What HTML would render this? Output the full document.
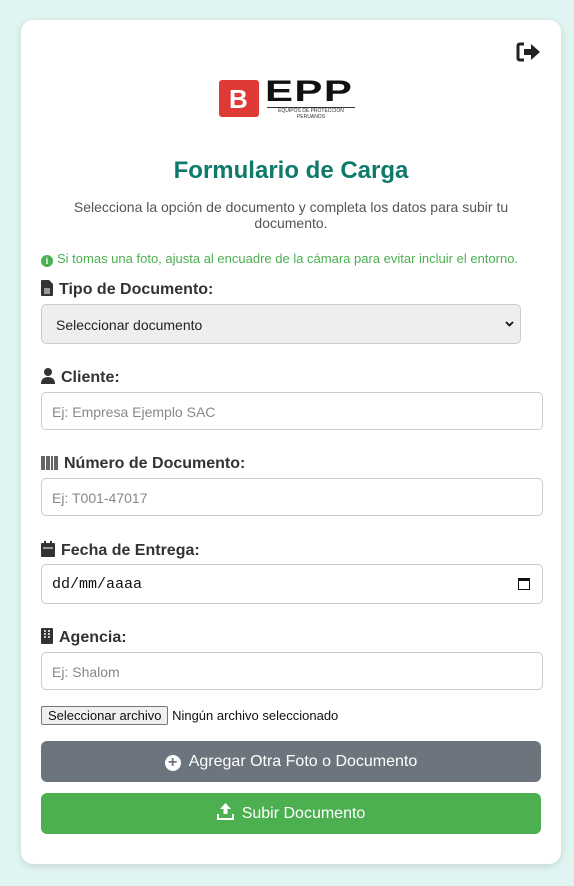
<!DOCTYPE html>
<html><head><style>
body{margin:0;background:#e0f4f1;font-family:"Liberation Sans",sans-serif;width:574px;height:886px;overflow:hidden}
.card{position:absolute;left:21px;top:20px;width:540px;height:844px;background:#fff;border-radius:12px;box-shadow:0 2px 8px rgba(0,0,0,.12)}
.abs{position:absolute}
h1{position:absolute;left:0;width:540px;top:137px;margin:0;text-align:center;color:#0f7a6c;font-size:24px;font-weight:bold}
.sub{left:40px;width:460px;top:179px;text-align:center;color:#555;font-size:14px;line-height:16px}
.note{left:20px;top:231px;color:#4caf50;font-size:13px}
.lbl{left:20px;font-size:16px;font-weight:bold;color:#333}
.lbl svg{vertical-align:-2px;margin-right:6px}
.inp{left:20px;width:502px;border:1px solid #ccc;border-radius:5px;height:38px;box-sizing:border-box;font-size:14px;color:#888;padding:11px 10px}
.btn{left:20px;width:500px;height:41px;border-radius:6px;color:#fff;font-size:16px;text-align:center;line-height:41px}
</style></head><body>
<div class="card">
<svg class="abs" style="left:495px;top:22px" width="26" height="20" viewBox="0 0 26 20"><path d="M8 2H4Q2 2 2 4V16Q2 18 4 18H8" stroke="#222" stroke-width="3" fill="none"/><path d="M8 7H15V2L24 10L15 18V13H8Z" fill="#222"/></svg>
<div class="abs" style="left:198px;top:60px;width:40px;height:37px;background:#e03a36;border-radius:3px"></div>
<div class="abs" style="left:208px;top:68px;color:#fff;font-weight:bold;font-size:26px;line-height:22px">B</div>
<div class="abs" style="left:244px;top:59px;font-weight:900;font-size:30px;letter-spacing:1px;line-height:26px;color:#111;transform:scaleX(1.4);transform-origin:left">EPP</div>
<div class="abs" style="left:246px;top:87px;width:88px;border-top:1px solid #333;font-size:5px;text-align:center;color:#333">EQUIPOS DE PROTECCION<br>PERUANOS</div>
<h1>Formulario de Carga</h1>
<div class="abs sub">Selecciona la opción de documento y completa los datos para subir tu documento.</div>
<div class="abs note"><span style="display:inline-block;width:12px;height:12px;border-radius:50%;background:#4caf50;color:#fff;font-size:9px;text-align:center;line-height:12px;font-weight:bold;vertical-align:-1px;margin-right:4px">i</span>Si tomas una foto, ajusta al encuadre de la cámara para evitar incluir el entorno.</div>
<div class="abs lbl" style="top:260px"><svg width="12" height="16"><path d="M0 1Q0 0 1 0H8L12 4V15Q12 16 11 16H1Q0 16 0 15Z" fill="#333"/><path d="M3 9H9M3 11H9M3 13H9" stroke="#fff"/></svg>Tipo de Documento:</div>
<div class="abs" style="left:20px;top:284px;width:480px;height:40px;box-sizing:border-box;background:#eee;border:1px solid #ccc;border-radius:5px;font-size:14px;color:#222;padding:12px 14px">Seleccionar documento<svg style="position:absolute;right:6px;top:16px" width="9" height="6"><path d="M1 1L4.5 4.5L8 1" stroke="#111" stroke-width="1.8" fill="none"/></svg></div>
<div class="abs lbl" style="top:348px"><svg width="14" height="16"><circle cx="7" cy="4" r="4" fill="#333"/><path d="M0 16Q0 9 7 9Q14 9 14 16Z" fill="#333"/></svg>Cliente:</div>
<div class="abs inp" style="top:372px">Ej: Empresa Ejemplo SAC</div>
<div class="abs lbl" style="top:435px"><svg width="17" height="14"><path d="M1 0V14M3 0V14M6 0V14M8 0V14M11 0V14M14 0V14M16 0V14" stroke="#333" stroke-width="1.5"/></svg>Número de Documento:</div>
<div class="abs inp" style="top:458px">Ej: T001-47017</div>
<div class="abs lbl" style="top:521px"><svg width="14" height="16"><rect x="0" y="2" width="14" height="14" rx="1" fill="#333"/><path d="M2 7H12" stroke="#fff"/><path d="M4 0V3M10 0V3" stroke="#333" stroke-width="2"/></svg>Fecha de Entrega:</div>
<div class="abs inp" style="top:544px;height:40px;color:#111;font-family:'Liberation Mono',monospace;font-size:15px">dd/mm/aaaa<svg style="position:absolute;right:12px;top:12px" width="12" height="13"><rect x="0.5" y="1.5" width="11" height="11" fill="none" stroke="#111"/><rect x="0" y="1" width="12" height="3" fill="#111"/></svg></div>
<div class="abs lbl" style="top:608px"><svg width="12" height="16"><rect width="12" height="16" rx="1" fill="#333"/><path d="M3 3H5M7 3H9M3 6H5M7 6H9M3 9H5M7 9H9" stroke="#fff" stroke-width="1.5"/></svg>Agencia:</div>
<div class="abs inp" style="top:632px">Ej: Shalom</div>
<div class="abs" style="left:20px;top:686px;font-size:13px;color:#111"><span style="display:inline-block;border:1px solid #767676;background:#efefef;padding:1px 6px;border-radius:2px">Seleccionar archivo</span> Ningún archivo seleccionado</div>
<div class="abs btn" style="top:721px;background:#6c757d"><span style="display:inline-block;width:16px;height:16px;border-radius:50%;background:#fff;color:#6c757d;line-height:16px;font-weight:bold;vertical-align:-1px;margin-right:8px">+</span>Agregar Otra Foto o Documento</div>
<div class="abs btn" style="top:773px;background:#4caf50"><svg width="17" height="17" style="vertical-align:-2px;margin-right:8px"><path d="M8.5 0L14 6H10.5V11H6.5V6H3Z" fill="#fff"/><path d="M0 11V17H17V11H15V15H2V11Z" fill="#fff"/></svg>Subir Documento</div>
</div>
</body></html>
